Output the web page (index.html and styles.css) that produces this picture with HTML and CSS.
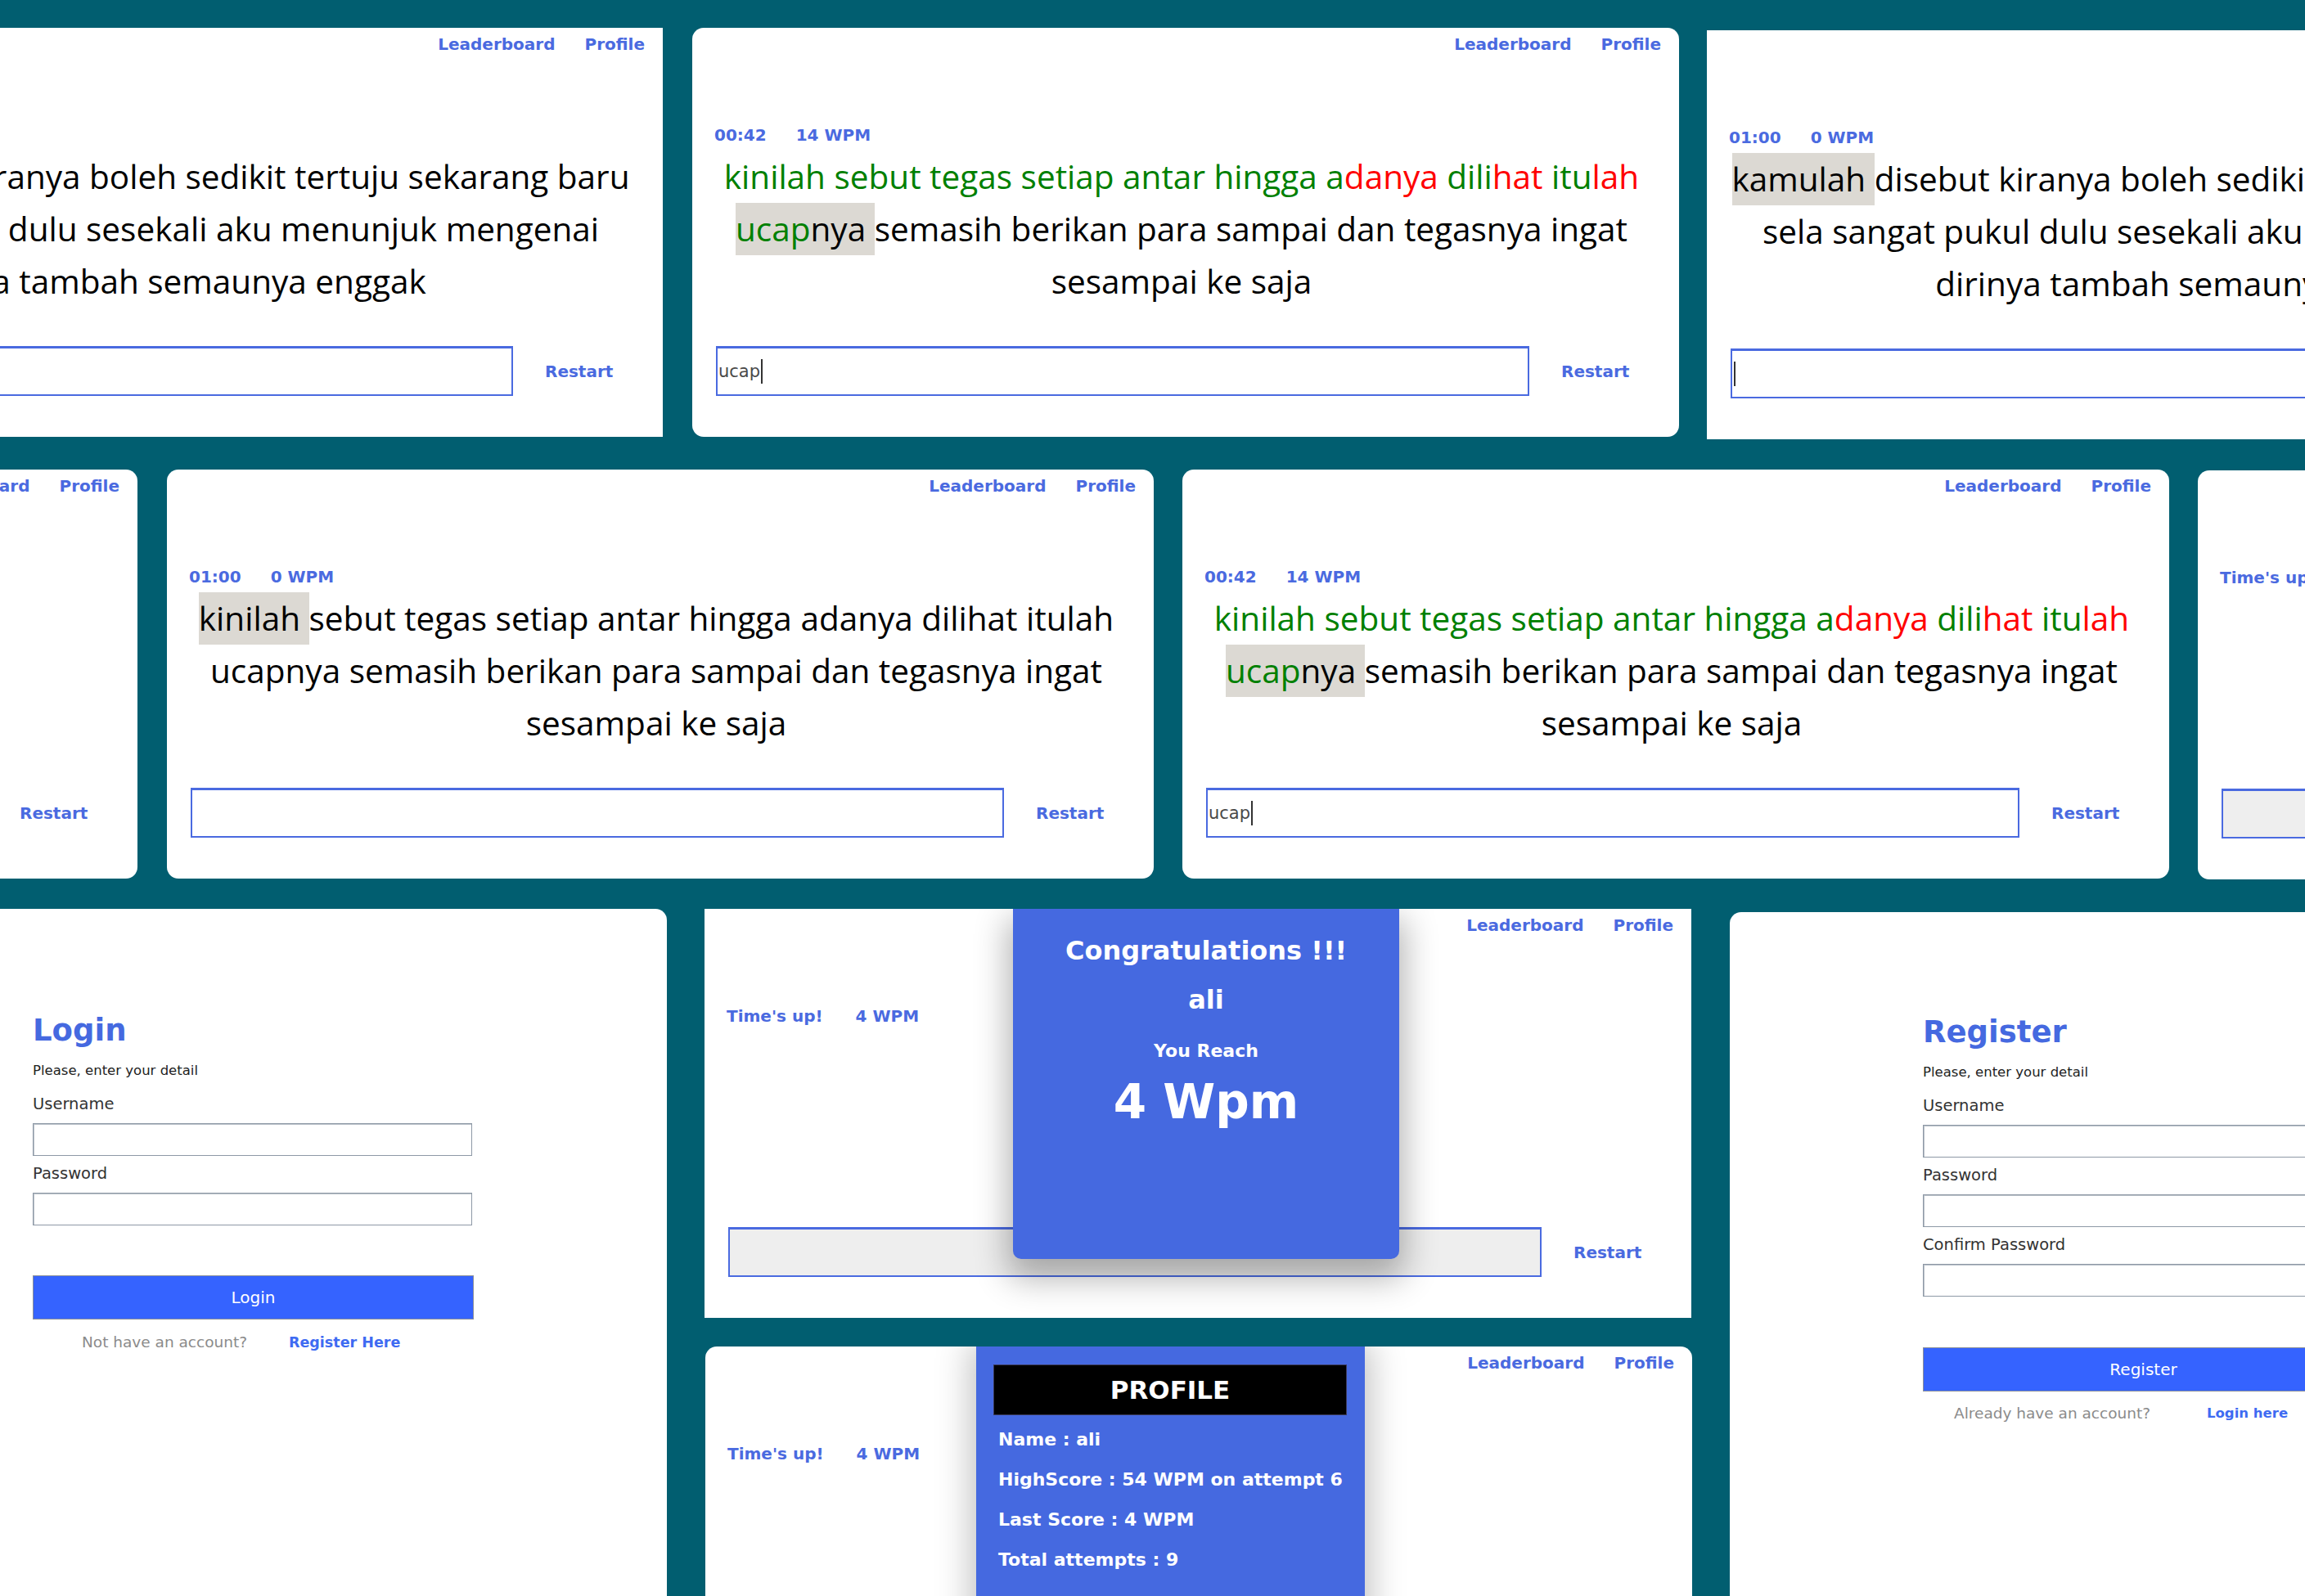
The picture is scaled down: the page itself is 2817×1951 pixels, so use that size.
FILE: index.html
```html
<!DOCTYPE html>
<html lang="id">
<head>
<meta charset="utf-8">
<title>Typing Test Screens</title>
<link rel="stylesheet" href="styles.css">
</head>
<body>
<div class="canvas">

  <!-- Row 1 -->
  <section class="card typing pos-a">
    <nav class="nav"><a>Leaderboard</a><a>Profile</a></nav>
    <div class="stats"><span>01:00</span><span>0 WPM</span></div>
    <div class="passage">
      <div class="line"><span class="cur">kamulah </span>disebut kiranya boleh sedikit tertuju sekarang baru</div>
      <div class="line">sela sangat pukul dulu sesekali aku menunjuk mengenai</div>
      <div class="line">dirinya tambah semaunya enggak</div>
    </div>
    <div class="controls"><div class="field"><span class="caret"></span></div><a class="restart">Restart</a></div>
  </section>

  <section class="card typing rounded pos-b">
    <nav class="nav"><a>Leaderboard</a><a>Profile</a></nav>
    <div class="stats"><span>00:42</span><span>14 WPM</span></div>
    <div class="passage">
      <div class="line"><span class="ok">kinilah sebut tegas setiap antar hingga a</span><span class="bad">danya</span><span class="ok"> dili</span><span class="bad">hat</span><span class="ok"> itu</span><span class="bad">lah</span></div>
      <div class="line"><span class="cur"><span class="ok">ucap</span>nya </span>semasih berikan para sampai dan tegasnya ingat</div>
      <div class="line">sesampai ke saja</div>
    </div>
    <div class="controls"><div class="field">ucap<span class="caret"></span></div><a class="restart">Restart</a></div>
  </section>

  <section class="card typing pos-c">
    <nav class="nav"><a>Leaderboard</a><a>Profile</a></nav>
    <div class="stats"><span>01:00</span><span>0 WPM</span></div>
    <div class="passage">
      <div class="line"><span class="cur">kamulah </span>disebut kiranya boleh sedikit tertuju sekarang baru</div>
      <div class="line">sela sangat pukul dulu sesekali aku menunjuk mengenai</div>
      <div class="line">dirinya tambah semaunya enggak</div>
    </div>
    <div class="controls"><div class="field"><span class="caret"></span></div><a class="restart">Restart</a></div>
  </section>

  <!-- Row 2 -->
  <section class="card typing rounded pos-d">
    <nav class="nav"><a>Leaderboard</a><a>Profile</a></nav>
    <div class="stats over"><span>Time's up!</span><span>4 WPM</span></div>
    <div class="passage"></div>
    <div class="controls"><div class="field"></div><a class="restart">Restart</a></div>
  </section>

  <section class="card typing rounded pos-e">
    <nav class="nav"><a>Leaderboard</a><a>Profile</a></nav>
    <div class="stats"><span>01:00</span><span>0 WPM</span></div>
    <div class="passage">
      <div class="line"><span class="cur">kinilah </span>sebut tegas setiap antar hingga adanya dilihat itulah</div>
      <div class="line">ucapnya semasih berikan para sampai dan tegasnya ingat</div>
      <div class="line">sesampai ke saja</div>
    </div>
    <div class="controls"><div class="field"></div><a class="restart">Restart</a></div>
  </section>

  <section class="card typing rounded pos-f">
    <nav class="nav"><a>Leaderboard</a><a>Profile</a></nav>
    <div class="stats"><span>00:42</span><span>14 WPM</span></div>
    <div class="passage">
      <div class="line"><span class="ok">kinilah sebut tegas setiap antar hingga a</span><span class="bad">danya</span><span class="ok"> dili</span><span class="bad">hat</span><span class="ok"> itu</span><span class="bad">lah</span></div>
      <div class="line"><span class="cur"><span class="ok">ucap</span>nya </span>semasih berikan para sampai dan tegasnya ingat</div>
      <div class="line">sesampai ke saja</div>
    </div>
    <div class="controls"><div class="field">ucap<span class="caret"></span></div><a class="restart">Restart</a></div>
  </section>

  <section class="card typing rounded pos-g">
    <nav class="nav"><a>Leaderboard</a><a>Profile</a></nav>
    <div class="stats over"><span>Time's up!</span><span>4 WPM</span></div>
    <div class="passage"></div>
    <div class="controls"><div class="field done"></div><a class="restart">Restart</a></div>
  </section>

  <!-- Row 3 -->
  <section class="card auth rounded pos-i">
    <div class="auth-form">
      <h1 class="auth-title">Login</h1>
      <p class="hint">Please, enter your detail</p>
      <div class="label">Username</div>
      <div class="box"></div>
      <div class="label">Password</div>
      <div class="box"></div>
      <div class="btn">Login</div>
      <div class="foot"><span class="q">Not have an account?</span><a class="link">Register Here</a></div>
    </div>
  </section>

  <section class="card typing pos-h">
    <nav class="nav"><a>Leaderboard</a><a>Profile</a></nav>
    <div class="stats over"><span>Time's up!</span><span>4 WPM</span></div>
    <div class="passage"></div>
    <div class="controls"><div class="field done"></div><a class="restart">Restart</a></div>
    <div class="congrats">
      <h2 class="c-title">Congratulations !!!</h2>
      <div class="c-who">ali</div>
      <div class="c-reach">You Reach</div>
      <div class="c-score">4 Wpm</div>
    </div>
  </section>

  <section class="card typing rounded pos-j">
    <nav class="nav"><a>Leaderboard</a><a>Profile</a></nav>
    <div class="stats over"><span>Time's up!</span><span>4 WPM</span></div>
    <div class="passage"></div>
    <div class="controls"><div class="field done"></div><a class="restart">Restart</a></div>
    <div class="profile">
      <h2 class="p-title">PROFILE</h2>
      <p class="p-row">Name : ali</p>
      <p class="p-row">HighScore : 54 WPM on attempt 6</p>
      <p class="p-row">Last Score : 4 WPM</p>
      <p class="p-row">Total attempts : 9</p>
    </div>
  </section>

  <section class="card auth rounded pos-k">
    <div class="auth-form">
      <h1 class="auth-title">Register</h1>
      <p class="hint">Please, enter your detail</p>
      <div class="label">Username</div>
      <div class="box"></div>
      <div class="label">Password</div>
      <div class="box"></div>
      <div class="label">Confirm Password</div>
      <div class="box"></div>
      <div class="btn">Register</div>
      <div class="foot foot-reg"><span class="q">Already have an account?</span><a class="link">Login here</a></div>
    </div>
  </section>

</div>
</body>
</html>
```

FILE: styles.css
```css
html, body {
  margin: 0;
  padding: 0;
  background: #015e70;
  overflow: hidden;
}

.canvas {
  position: relative;
  width: 2817px;
  height: 1951px;
  overflow: hidden;
  background: #015e70;
  font-family: "DejaVu Sans", "Liberation Sans", sans-serif;
}

/* screenshot tiles placed on the collage */
.card {
  position: absolute;
  background: #ffffff;
  box-sizing: border-box;
  overflow: hidden;
}
.rounded { border-radius: 14px; }

.pos-a { left: -396px; top: 34px; }
.pos-b { left: 846px;  top: 34px; }
.pos-c { left: 2086px; top: 37px; }
.pos-d { left: -1038px; top: 574px; }
.pos-e { left: 204px;  top: 574px; }
.pos-f { left: 1445px; top: 574px; }
.pos-g { left: 2686px; top: 575px; }
.pos-h { left: 861px;  top: 1111px; border-radius: 0; }
.pos-j { left: 862px;  top: 1646px; }
.pos-i { left: -389px; top: 1111px; }
.pos-k { left: 2114px; top: 1115px; }

/* typing screen */
.typing {
  width: 1206px;
  height: 500px;
  padding: 6px 22px 0 27px;
  display: flex;
  flex-direction: column;
}

.nav {
  display: flex;
  justify-content: flex-end;
  gap: 36px;
  font-weight: 700;
  font-size: 20px;
  line-height: 28px;
  color: #4a6ae0;
}

.stats {
  display: flex;
  gap: 36px;
  margin-top: 83px;
  font-weight: 700;
  font-size: 20px;
  line-height: 28px;
  color: #4a6ae0;
}
.stats.over { gap: 40px; }

.passage {
  margin-top: 5px;
  margin-right: 15px;
  height: 192px;
  font-family: "Open Sans", "DejaVu Sans", sans-serif;
  font-size: 40.5px;
  line-height: 64px;
  text-align: center;
  color: #000000;
}
.line { white-space: nowrap; }
.ok  { color: #008000; }
.bad { color: #ff0000; }
.cur {
  display: inline-block;
  white-space: pre;
  background: #dcd9d3;
}

.controls {
  margin-top: 47px;
  display: flex;
  align-items: center;
}
.field {
  margin-left: 2px;
  width: 994px;
  height: 61px;
  box-sizing: border-box;
  border: 2px solid #4a6ae0;
  border-top-width: 3px;
  display: flex;
  align-items: center;
  padding-left: 1px;
  font-size: 21px;
  color: #4a4a4a;
  background: #ffffff;
}
.field.done { background: #eeeeee; }
.caret {
  display: inline-block;
  width: 2px;
  height: 30px;
  margin-left: 1px;
  background: #333333;
}
.restart {
  margin-left: 39px;
  font-weight: 700;
  font-size: 20px;
  line-height: 28px;
  color: #4a6ae0;
}

/* result popup */
.congrats {
  position: absolute;
  left: 377px;
  top: 0;
  width: 472px;
  height: 428px;
  box-sizing: border-box;
  padding-top: 29px;
  background: #4569e0;
  border-radius: 0 0 10px 10px;
  box-shadow: 0 18px 40px 6px rgba(0, 0, 0, 0.3);
  color: #ffffff;
  display: flex;
  flex-direction: column;
  align-items: center;
  font-weight: 700;
  text-align: center;
}
.c-title { margin: 0; font-size: 32px; line-height: 44px; font-weight: 700; }
.c-who   { margin-top: 16px; font-size: 32px; line-height: 44px; }
.c-reach { margin-top: 26px; font-size: 22px; line-height: 30px; }
.c-score { margin-top: 11px; font-size: 58px; line-height: 72px; }

/* profile popup */
.profile {
  position: absolute;
  left: 331px;
  top: 0;
  width: 475px;
  height: 520px;
  box-sizing: border-box;
  padding: 22px 22px 0 21px;
  background: #4569e0;
  box-shadow: 0 0 40px 6px rgba(0, 0, 0, 0.25);
  color: #ffffff;
  font-weight: 700;
}
.p-title {
  margin: 0;
  height: 62px;
  box-sizing: border-box;
  background: #000000;
  border: 1px solid #3a3a5a;
  display: flex;
  align-items: center;
  justify-content: center;
  font-size: 31px;
  font-weight: 700;
}
.p-row {
  margin: 19px 0 0 6px;
  font-size: 22px;
  line-height: 30px;
}
.p-title + .p-row { margin-top: 15px; }

/* login / register */
.auth {
  width: 1204px;
  height: 900px;
}
.pos-i { padding: 124px 0 0 429px; }
.pos-k { padding: 122px 0 0 236px; }

.auth-form {
  width: 539px;
  display: flex;
  flex-direction: column;
}
.auth-title {
  margin: 0;
  font-size: 37px;
  line-height: 50px;
  font-weight: 700;
  color: #4569e0;
}
.hint {
  margin: 13px 0 0;
  font-size: 16.5px;
  line-height: 22px;
  color: #222222;
}
.label {
  margin-top: 9px;
  font-size: 19.5px;
  line-height: 26px;
  color: #333333;
}
.hint + .label { margin-top: 17px; }
.box {
  margin-top: 10px;
  width: 537px;
  height: 40px;
  box-sizing: border-box;
  border: 1px solid #8e99a6;
  box-shadow: inset 1px 1px 0 #b9c0c8;
  background: #ffffff;
}
.btn {
  margin-top: 61px;
  height: 54px;
  box-sizing: border-box;
  border: 1px solid #8a8f99;
  background: #3563ff;
  color: #ffffff;
  font-size: 20px;
  display: flex;
  align-items: center;
  justify-content: center;
}
.pos-k .btn { margin-top: 62px; }
.foot {
  margin-top: 16px;
  display: flex;
  padding-left: 60px;
  font-size: 18.5px;
  line-height: 24px;
}
.foot .q { width: 253px; color: #8b8b8b; }
.foot .link { color: #3e6bf2; font-weight: 600; font-size: 17.5px; }
.foot-reg { padding-left: 38px; margin-top: 15px; }
.foot-reg .q { width: 309px; }
.foot-reg .link { font-size: 16.5px; }
```
